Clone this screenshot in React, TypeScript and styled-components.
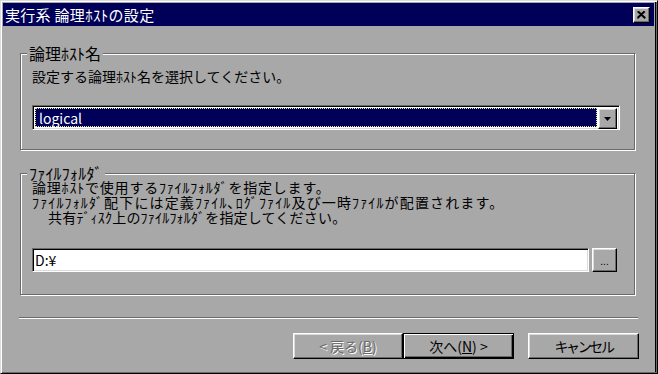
import React from "react";
import styled, { createGlobalStyle, css } from "styled-components";

const FACE = "#a8a8a8";
const NAVY = "#000058";
const SHADOW = "#6a6a6a";

const GlobalStyle = createGlobalStyle`
  html, body {
    margin: 0;
    padding: 0;
    background: ${FACE};
  }
  body {
    font-family: "Noto Sans CJK JP", "Noto Sans", sans-serif;
  }
`;

const raised = css`
  background: ${FACE};
  border: 1px solid;
  border-color: #fff #000 #000 #fff;
  box-shadow: inset -1px -1px 0 ${SHADOW}, inset 1px 1px 0 #dcdcdc;
`;

const sunken = css`
  border: 1px solid;
  border-color: ${SHADOW} #fff #fff ${SHADOW};
  box-shadow: inset 1px 1px 0 #000, inset -1px -1px 0 #dcdcdc;
`;

const Window = styled.div`
  box-sizing: border-box;
  width: 658px;
  height: 374px;
  padding: 2px 3px 2px 2px;
  background: ${FACE};
  border: 1px solid;
  border-color: #dcdcdc #000 #000 #dcdcdc;
  box-shadow: inset 1px 1px 0 #fff, inset -1px -1px 0 ${SHADOW},
    inset -2px 0 0 #000;
  display: flex;
  flex-direction: column;
  font-family: "Noto Sans CJK JP", sans-serif;
  color: #000;
`;

const TitleBar = styled.div`
  height: 23px;
  background: ${NAVY};
  display: flex;
  align-items: center;
  padding: 0 4px 0 2px;
  color: #fff;
  font-size: 15px;
`;

const Title = styled.span`
  flex: 1;
  line-height: 23px;
  letter-spacing: 0.3px;
  white-space: nowrap;
`;

const CloseButton = styled.button`
  ${raised};
  box-sizing: border-box;
  width: 17px;
  height: 16px;
  padding: 0;
  display: flex;
  align-items: center;
  justify-content: center;
`;

const Body = styled.div`
  display: flex;
  flex-direction: column;
  padding: 27px 0 0 17px;
`;

const Group = styled.div<{ $height: number; $top: number; $pad: number }>`
  position: relative;
  box-sizing: border-box;
  width: 615px;
  height: ${(p) => p.$height}px;
  margin-top: ${(p) => p.$top}px;
  padding: ${(p) => p.$pad}px 0 0 11px;
  border: 1px solid ${SHADOW};
  box-shadow: inset 1px 1px 0 #fff, 1px 1px 0 #fff;
  display: flex;
  flex-direction: column;
`;

const Legend = styled.span<{ $ls?: number }>`
  position: absolute;
  top: -9px;
  left: 6px;
  padding: 0 2px;
  background: ${FACE};
  font-size: 16px;
  line-height: 16px;
  letter-spacing: ${(p) => p.$ls ?? 0}px;
  white-space: nowrap;
`;

const Text = styled.div<{ $lh: number; $ls?: number; $indent?: number }>`
  font-size: 14px;
  line-height: ${(p) => p.$lh}px;
  letter-spacing: ${(p) => p.$ls ?? 0}px;
  padding-left: ${(p) => p.$indent ?? 0}px;
  white-space: nowrap;
`;

const Combo = styled.div`
  ${sunken};
  box-sizing: border-box;
  width: 588px;
  height: 25px;
  margin-top: 21px;
  padding: 2px;
  background: #fff;
  display: flex;
`;

const Selected = styled.div`
  flex: 1;
  box-sizing: border-box;
  margin-right: 1px;
  background: ${NAVY};
  border: 1px dotted #e8e890;
  color: #fff;
  font-size: 14px;
  line-height: 18px;
  padding-left: 3px;
`;

const ArrowButton = styled.div`
  ${raised};
  box-sizing: border-box;
  width: 19px;
  height: 21px;
  display: flex;
  align-items: center;
  justify-content: center;
`;

const FieldRow = styled.div`
  display: flex;
  margin-top: 23px;
  gap: 3px;
`;

const Edit = styled.div`
  ${sunken};
  box-sizing: border-box;
  width: 557px;
  height: 24px;
  background: #fff;
  font-size: 14px;
  line-height: 22px;
  padding-left: 2px;
`;

const BrowseButton = styled.button`
  ${raised};
  box-sizing: border-box;
  width: 25px;
  height: 24px;
  padding: 0 0 4px;
  font-size: 10px;
  line-height: 10px;
  display: flex;
  align-items: flex-end;
  justify-content: center;
  color: #000;
`;

const Separator = styled.div`
  width: 619px;
  height: 1px;
  margin: 22px 0 0 -1px;
  background: ${SHADOW};
  border-bottom: 1px solid #fff;
`;

const ButtonRow = styled.div`
  display: flex;
  justify-content: flex-end;
  width: 619px;
  margin-top: 14px;
`;

const PushButton = styled.button<{
  $width: number;
  $gap?: number;
  $default?: boolean;
  $tight?: boolean;
}>`
  ${raised};
  box-sizing: border-box;
  width: ${(p) => p.$width}px;
  height: 26px;
  margin-left: ${(p) => p.$gap ?? 0}px;
  padding: 0;
  font-family: "Noto Sans CJK JP", sans-serif;
  font-size: 14px;
  letter-spacing: ${(p) => (p.$tight ? "-2.4px" : "0")};
  color: #000;
  ${(p) =>
    p.$default &&
    css`
      border-color: #000;
      box-shadow: inset 1px 1px 0 #fff, inset -1px -1px 0 #000,
        inset -2px -2px 0 ${SHADOW};
    `}
  &:disabled {
    color: ${SHADOW};
    text-shadow: 1px 1px 0 #fff;
  }
`;

const Key = styled.span`
  text-decoration: underline;
`;

export default function App(): JSX.Element {
  return (
    <>
      <GlobalStyle />
      <Window>
        <TitleBar>
          <Title>実行系 論理ﾎｽﾄの設定</Title>
          <CloseButton aria-label="閉じる">
            <svg width="9" height="8" viewBox="0 0 9 8">
              <path
                d="M0.5 0.5 L8 7.5 M1.5 0.5 L8.5 7 M8 0.5 L0.5 7.5 M7 0.5 L0.5 6.5"
                stroke="#000"
                strokeWidth="1.3"
              />
            </svg>
          </CloseButton>
        </TitleBar>
        <Body>
          <Group $height={97} $top={0} $pad={14}>
            <Legend>論理ﾎｽﾄ名</Legend>
            <Text $lh={16}>設定する論理ﾎｽﾄ名を選択してください。</Text>
            <Combo>
              <Selected>logical</Selected>
              <ArrowButton>
                <svg width="9" height="6" viewBox="0 0 9 6">
                  <path d="M1 1 H8 L4.5 5 Z" fill="#000" />
                </svg>
              </ArrowButton>
            </Combo>
          </Group>
          <Group $height={122} $top={23} $pad={6}>
            <Legend $ls={0.2}>ﾌｧｲﾙﾌｫﾙﾀﾞ</Legend>
            <Text $lh={15} $ls={0.8}>
              論理ﾎｽﾄで使用するﾌｧｲﾙﾌｫﾙﾀﾞを指定します。
            </Text>
            <Text $lh={15} $ls={1.14}>
              ﾌｧｲﾙﾌｫﾙﾀﾞ配下には定義ﾌｧｲﾙ､ﾛｸﾞﾌｧｲﾙ及び一時ﾌｧｲﾙが配置されます。
            </Text>
            <Text $lh={15} $ls={0.2} $indent={16}>
              共有ﾃﾞｨｽｸ上のﾌｧｲﾙﾌｫﾙﾀﾞを指定してください。
            </Text>
            <FieldRow>
              <Edit>D:¥</Edit>
              <BrowseButton>...</BrowseButton>
            </FieldRow>
          </Group>
          <Separator />
          <ButtonRow>
            <PushButton $width={110} disabled>
              &lt; 戻る(<Key>B</Key>)
            </PushButton>
            <PushButton $width={111} $default>
              次へ(<Key>N</Key>) &gt;
            </PushButton>
            <PushButton $width={111} $gap={14} $tight>
              キャンセル
            </PushButton>
          </ButtonRow>
        </Body>
      </Window>
    </>
  );
}
